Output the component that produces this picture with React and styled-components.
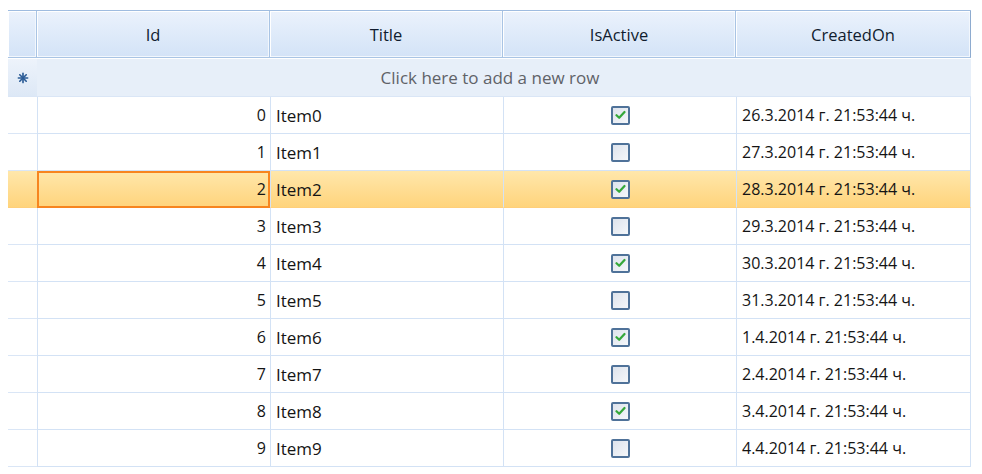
import React from 'react';
import styled, { createGlobalStyle } from 'styled-components';

const GlobalStyle = createGlobalStyle`
  html, body {
    margin: 0;
    padding: 0;
    background: #ffffff;
  }
  body {
    font-family: "Open Sans", "Noto Sans", Arial, sans-serif;
  }
`;

const COLUMNS = '29px 233px 233px 233px 235px';

const Page = styled.div`
  padding: 10px 0 0 8px;
  width: 982px;
  height: 474px;
  box-sizing: border-box;
  overflow: hidden;
`;

const Grid = styled.div`
  width: 963px;
  border-top: 1px solid #9fbce0;
`;

const Row = styled.div`
  display: grid;
  grid-template-columns: ${COLUMNS};
  height: ${(p) => p.height || 37}px;
  box-sizing: border-box;
`;

const HeaderCell = styled.div`
  display: flex;
  align-items: center;
  justify-content: center;
  box-sizing: border-box;
  background: linear-gradient(#ebf2fc, #d3e3f7);
  border-right: 1px solid #a9c4e4;
  border-bottom: 1px solid #a9c4e4;
  box-shadow: inset 1px 1px 0 #ffffff, inset -1px -1px 0 #f2f7fd;
  color: #101c2e;
  font-size: 16.5px;
  &:last-child {
    border-right-color: #8eabcf;
  }
`;

const Indicator = styled.div`
  display: flex;
  align-items: center;
  justify-content: center;
  box-sizing: border-box;
  background: ${(p) =>
    p.selected
      ? 'linear-gradient(#ffe7ab, #ffd47c)'
      : p.newRow
      ? 'linear-gradient(#edf3fb, #dde8f6)'
      : '#ffffff'};
  border-bottom: 1px solid ${(p) => (p.selected ? '#ffcf7a' : '#dae6f6')};
  border-top: ${(p) => (p.newRow ? '1px solid #ffffff' : 'none')};
`;

const NewRowCell = styled.div`
  grid-column: 2 / 6;
  display: flex;
  align-items: center;
  justify-content: center;
  padding-right: 28px;
  box-sizing: border-box;
  background: #e7eff9;
  border-top: 1px solid #ffffff;
  border-bottom: 1px solid #dae6f6;
  color: #5f6268;
  font-size: 17px;
`;

const Cell = styled.div`
  display: flex;
  align-items: center;
  justify-content: ${(p) =>
    p.align === 'right' ? 'flex-end' : p.align === 'center' ? 'center' : 'flex-start'};
  padding: 0 ${(p) => (p.align === 'right' ? '4px' : '0')} 0
    ${(p) => (p.align === 'left' ? '5px' : '0')};
  box-sizing: border-box;
  background: ${(p) => (p.selected ? 'linear-gradient(#ffe7ab, #ffd47c)' : '#ffffff')};
  border-left: 1px solid #d3e2f5;
  border-bottom: 1px solid ${(p) => (p.selected ? '#ffcf7a' : '#d3e2f5')};
  outline: ${(p) => (p.current ? '2px solid #f7851f' : 'none')};
  outline-offset: -2px;
  color: #141414;
  font-size: ${(p) => (p.narrow ? '16px' : '17px')};
  white-space: nowrap;
  &:last-child {
    border-right: 1px solid #d3e2f5;
  }
`;

const Box = styled.span`
  width: 19px;
  height: 19px;
  box-sizing: border-box;
  border: 2px solid #4f7299;
  border-radius: 2px;
  background: linear-gradient(135deg, #dde3ec, #f5f7fa);
  display: flex;
  align-items: center;
  justify-content: center;
`;

const NewRowIcon = () => (
  <svg width="12" height="12" viewBox="0 0 13 13">
    <g stroke="#2a5b96" strokeWidth="1.8" strokeLinecap="round">
      <line x1="6.5" y1="1.5" x2="6.5" y2="11.5" />
      <line x1="1.5" y1="6.5" x2="11.5" y2="6.5" />
      <line x1="3" y1="3" x2="10" y2="10" />
      <line x1="10" y1="3" x2="3" y2="10" />
    </g>
  </svg>
);

const CheckBox = ({ checked }) => (
  <Box>
    {checked && (
      <svg width="11" height="10" viewBox="0 0 11 10">
        <path d="M1.5 5.2 L4.2 7.8 L9.5 2" fill="none" stroke="#35a83a" strokeWidth="2.2" strokeLinecap="round" strokeLinejoin="round" />
      </svg>
    )}
  </Box>
);

const dates = [
  '26.3.2014', '27.3.2014', '28.3.2014', '29.3.2014', '30.3.2014',
  '31.3.2014', '1.4.2014', '2.4.2014', '3.4.2014', '4.4.2014',
];

const rows = dates.map((d, i) => ({
  id: i,
  title: `Item${i}`,
  active: i % 2 === 0,
  createdOn: `${d} г. 21:53:44 ч.`,
}));

const App = () => {
  const selectedId = 2;
  return (
    <>
      <GlobalStyle />
      <Page>
        <Grid>
          <Row height={47}>
            <HeaderCell />
            <HeaderCell>Id</HeaderCell>
            <HeaderCell>Title</HeaderCell>
            <HeaderCell>IsActive</HeaderCell>
            <HeaderCell>CreatedOn</HeaderCell>
          </Row>
          <Row height={39}>
            <Indicator newRow>
              <NewRowIcon />
            </Indicator>
            <NewRowCell>Click here to add a new row</NewRowCell>
          </Row>
          {rows.map((r) => {
            const sel = r.id === selectedId;
            return (
              <Row key={r.id}>
                <Indicator selected={sel} />
                <Cell align="right" selected={sel} current={sel} narrow>{r.id}</Cell>
                <Cell align="left" selected={sel}>{r.title}</Cell>
                <Cell align="center" selected={sel}>
                  <CheckBox checked={r.active} />
                </Cell>
                <Cell align="left" selected={sel} narrow>{r.createdOn}</Cell>
              </Row>
            );
          })}
        </Grid>
      </Page>
    </>
  );
};

export default App;
